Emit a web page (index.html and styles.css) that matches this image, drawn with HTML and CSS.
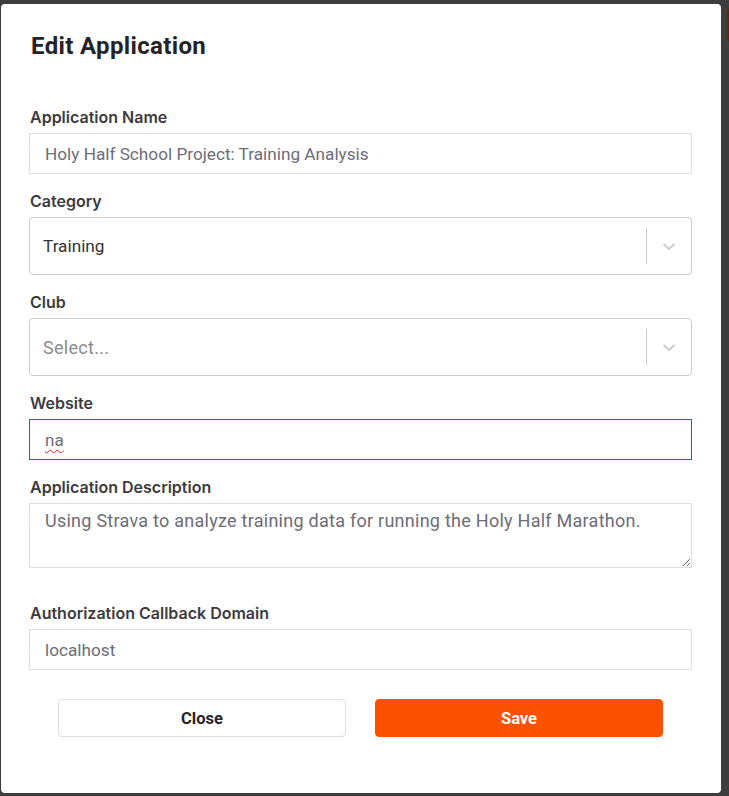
FILE: index.html
```html
<!DOCTYPE html>
<html lang="en">
<head>
<meta charset="utf-8">
<title>Edit Application</title>
<link rel="stylesheet" href="styles.css">
</head>
<body>
<div class="backdrop-tab"></div>
<div class="modal">
  <h2 class="modal-title">Edit Application</h2>
  <form class="form">
    <div class="field">
      <label class="label">Application Name</label>
      <div class="input">Holy Half School Project: Training Analysis</div>
    </div>
    <div class="field">
      <label class="label">Category</label>
      <div class="select">
        <span class="select-value">Training</span>
        <span class="select-sep"></span>
        <span class="select-arrow">
          <svg width="20" height="20" viewBox="0 0 20 20"><path d="M4.5 8 L10 13 L15.5 8" fill="none" stroke="#cccccc" stroke-width="2"/></svg>
        </span>
      </div>
    </div>
    <div class="field">
      <label class="label">Club</label>
      <div class="select">
        <span class="select-value placeholder">Select...</span>
        <span class="select-sep"></span>
        <span class="select-arrow">
          <svg width="20" height="20" viewBox="0 0 20 20"><path d="M4.5 8 L10 13 L15.5 8" fill="none" stroke="#cccccc" stroke-width="2"/></svg>
        </span>
      </div>
    </div>
    <div class="field">
      <label class="label">Website</label>
      <div class="input focused"><span class="misspelled">na</span></div>
    </div>
    <div class="field field-desc">
      <label class="label">Application Description</label>
      <textarea class="textarea">Using Strava to analyze training data for running the Holy Half Marathon.</textarea>
    </div>
    <div class="field">
      <label class="label">Authorization Callback Domain</label>
      <div class="input">localhost</div>
    </div>
    <div class="actions">
      <button type="button" class="btn btn-close">Close</button>
      <button type="button" class="btn btn-save">Save</button>
    </div>
  </form>
</div>
</body>
</html>
```
FILE: styles.css
```css
html, body {
  margin: 0;
  padding: 0;
  background: #3d3d3d;
}
body {
  padding: 4px 0 0 1px;
  height: 796px;
  box-sizing: border-box;
  overflow: hidden;
  position: relative;
  font-family: Roboto, "Liberation Sans", sans-serif;
}
.backdrop-tab {
  position: absolute;
  left: 727px;
  top: 8px;
  width: 12px;
  height: 34px;
  border-radius: 4px;
  background: #5a2708;
}
.modal {
  width: 720px;
  height: 789px;
  box-sizing: border-box;
  background: #fff;
  border-radius: 4px;
  padding: 0 29px 0 28px;
}
.modal-title {
  margin: 0;
  padding: 27px 0 0 2px;
  height: 103px;
  box-sizing: border-box;
  font-family: Roboto, sans-serif;
  font-weight: 700;
  font-size: 24px;
  letter-spacing: 0.35px;
  line-height: 30px;
  color: #242428;
}
.form {
  display: flex;
  flex-direction: column;
}
.field {
  display: flex;
  flex-direction: column;
  margin-bottom: 17px;
}
.field-desc {
  margin-bottom: 35px;
}
.label {
  font-family: Inter, "Noto Sans", sans-serif;
  font-weight: 600;
  font-size: 16px;
  line-height: 20px;
  color: #3b3b3f;
  margin: 0 0 6px 1px;
}
.input {
  height: 41px;
  box-sizing: border-box;
  border: 1px solid #dfdfe6;
  padding: 0 15px;
  display: flex;
  align-items: center;
  font-size: 17.2px;
  color: #6d6d78;
}
.input.focused {
  border-color: #1f6b8f;
}
.misspelled {
  font-size: 17px;
  text-decoration: underline wavy #e02020;
  text-decoration-thickness: 1px;
  text-underline-offset: 3px;
}
.select {
  height: 58px;
  box-sizing: border-box;
  border: 1px solid #cccccc;
  border-radius: 4px;
  display: flex;
  align-items: center;
  padding-left: 13px;
}
.select-value {
  flex: 1;
  font-size: 17.2px;
  color: #333333;
}
.select-value.placeholder {
  font-size: 18px;
  letter-spacing: 0.3px;
  color: #8c8c8c;
}
.select-sep {
  width: 1px;
  height: 36px;
  background: #cccccc;
}
.select-arrow {
  width: 44px;
  display: flex;
  justify-content: center;
  align-items: center;
}
.textarea {
  height: 65px;
  box-sizing: border-box;
  border: 1px solid #dfdfe6;
  padding: 5px 15px;
  margin: 0;
  font-family: Roboto, sans-serif;
  font-size: 18px;
  letter-spacing: 0.26px;
  line-height: 24px;
  color: #6d6d78;
  resize: vertical;
  outline: none;
  display: block;
}
.actions {
  display: flex;
  justify-content: center;
  gap: 29px;
  margin-top: 12px;
}
.btn {
  width: 288px;
  height: 38px;
  border-radius: 4px;
  font-family: Roboto, sans-serif;
  font-weight: 700;
  font-size: 16.5px;
  cursor: pointer;
}
.btn-close {
  background: #fff;
  border: 1px solid #dfdfe6;
  color: #242428;
}
.btn-save {
  background: #fc5200;
  border: 1px solid #fc5200;
  color: #fff;
}
```
